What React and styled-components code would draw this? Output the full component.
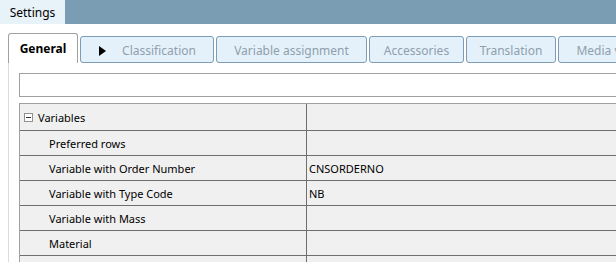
import React from 'react'
import styled, { createGlobalStyle } from 'styled-components'

const GlobalStyle = createGlobalStyle`
    html, body {
        margin:0;
        padding:0;
        background:#ffffff;
        overflow:hidden;
    }
    body {
        font-family:"Noto Sans", "Open Sans", sans-serif;
        font-size:11px;
        color:#000000;
    }
`

const tabs = [
    { label: 'Classification', width: 134, arrow: true },
    { label: 'Variable assignment', width: 151 },
    { label: 'Accessories', width: 95 },
    { label: 'Translation', width: 90 },
    { label: 'Media variants', width: 120 },
]

const rows = [
    { label: 'Preferred rows', value: '' },
    { label: 'Variable with Order Number', value: 'CNSORDERNO' },
    { label: 'Variable with Type Code', value: 'NB' },
    { label: 'Variable with Mass', value: '' },
    { label: 'Material', value: '' },
    { label: '', value: '' },
]

function App() {
    return (
        <Page>
            <GlobalStyle />
            <TitleBar>
                <TitleTab>Settings</TitleTab>
            </TitleBar>
            <TabStrip>
                <ActiveTab>General</ActiveTab>
                {tabs.map(t => (
                    <Tab key={t.label} $width={t.width} $arrow={t.arrow}>
                        {t.arrow && (
                            <Arrow width="7" height="10" viewBox="0 0 7 10">
                                <polygon points="0,0 7,5 0,10" fill="#000000" />
                            </Arrow>
                        )}
                        {t.label}
                    </Tab>
                ))}
            </TabStrip>
            <Panel>
                <TextBox />
                <Grid>
                    <GroupRow>
                        <LabelCell>
                            <Expander />
                            Variables
                        </LabelCell>
                        <ValueCell />
                    </GroupRow>
                    {rows.map((r, i) => (
                        <Row key={i}>
                            <LabelCell $indent>{r.label}</LabelCell>
                            <ValueCell>{r.value}</ValueCell>
                        </Row>
                    ))}
                </Grid>
            </Panel>
        </Page>
    )
}

export default App

const Page = styled.div`
    width:616px;
    height:262px;
    overflow:hidden;
`
const TitleBar = styled.div`
    height:24px;
    background-color:#7a9db3;
    display:flex;
`
const TitleTab = styled.div`
    width:65px;
    background-color:#e8f2f9;
    display:flex;
    align-items:center;
    justify-content:center;
    font-size:12px;
`
const TabStrip = styled.div`
    height:39px;
    display:flex;
    align-items:flex-end;
    gap:2px;
    padding-left:8px;
    box-sizing:border-box;
    white-space:nowrap;
`
const ActiveTab = styled.div`
    width:70px;
    height:30px;
    box-sizing:border-box;
    border:1px solid #a0a0a0;
    border-bottom:none;
    border-radius:3px 3px 0 0;
    background:#ffffff;
    display:flex;
    align-items:center;
    justify-content:center;
    font-weight:bold;
    font-size:12px;
    flex-shrink:0;
`
const Tab = styled.div`
    position:relative;
    width:${p => p.$width}px;
    height:27px;
    box-sizing:border-box;
    border:1px solid #7c9db5;
    border-radius:3px;
    background:#e5f1fa;
    color:#8e9fae;
    display:flex;
    align-items:center;
    justify-content:center;
    padding-top:2px;
    padding-left:${p => (p.$arrow ? '24px' : '0')};
    font-size:12px;
    flex-shrink:0;
`
const Arrow = styled.svg`
    position:absolute;
    left:18px;
    top:9px;
`
const Panel = styled.div`
    border-left:1px solid #dcdcdc;
    margin-left:8px;
    padding:10px 0 0 10px;
    height:200px;
`
const TextBox = styled.div`
    width:700px;
    height:24px;
    box-sizing:border-box;
    border:1px solid #a0a0a0;
    background:#ffffff;
`
const Grid = styled.div`
    margin-top:6px;
    width:700px;
    border-top:1px solid #a0a0a0;
    border-left:1px solid #a0a0a0;
    background:#f0f0f0;
`
const Row = styled.div`
    display:flex;
    height:25px;
    box-sizing:border-box;
    border-bottom:1px solid #6e6e6e;
`
const GroupRow = styled(Row)`
    height:27px;
`
const LabelCell = styled.div`
    width:287px;
    box-sizing:border-box;
    border-right:1px solid #6e6e6e;
    display:flex;
    align-items:center;
    gap:5px;
    padding-left:${p => (p.$indent ? '29px' : '4px')};
`
const ValueCell = styled.div`
    flex:1;
    display:flex;
    align-items:center;
    padding-left:2px;
`
const Expander = styled.span`
    position:relative;
    width:9px;
    height:9px;
    box-sizing:border-box;
    border:1px solid #919191;
    background:#ffffff;
    &::after {
        content:'';
        position:absolute;
        left:1px;
        right:1px;
        top:3px;
        height:1px;
        background:#333333;
    }
`
